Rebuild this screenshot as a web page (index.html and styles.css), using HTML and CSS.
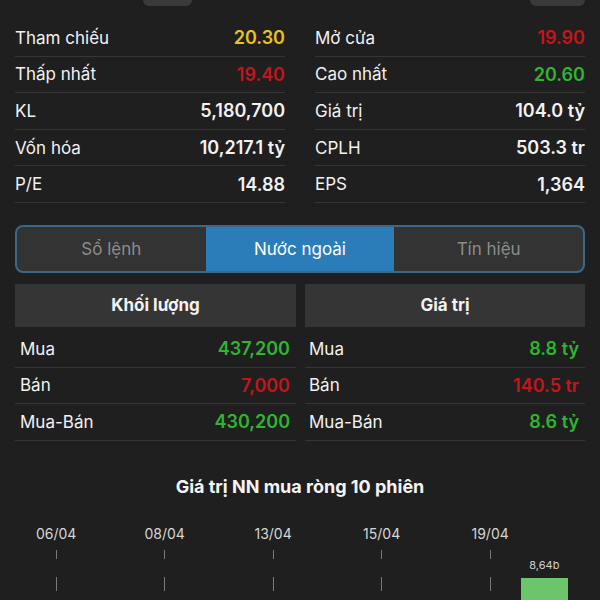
FILE: index.html
```html
<!DOCTYPE html>
<html lang="vi">
<head>
    <meta charset="UTF-8">
    <meta name="viewport" content="width=device-width, initial-scale=1.0">
    <title>Nước ngoài</title>
    <link rel="stylesheet" href="styles.css">
</head>
<body>

    <!-- Top buttons (cut off) -->
    <div class="top-stub">
        <span class="pill pill-left"></span>
        <span class="pill pill-right"></span>
    </div>

    <!-- Stats -->
    <div class="stats">
        <div class="stats-col">
            <div class="row"><span>Tham chiếu</span><b class="yellow">20.30</b></div>
            <div class="row"><span>Thấp nhất</span><b class="red">19.40</b></div>
            <div class="row"><span>KL</span><b>5,180,700</b></div>
            <div class="row"><span>Vốn hóa</span><b>10,217.1 tỷ</b></div>
            <div class="row"><span>P/E</span><b>14.88</b></div>
        </div>
        <div class="stats-col">
            <div class="row"><span>Mở cửa</span><b class="red">19.90</b></div>
            <div class="row"><span>Cao nhất</span><b class="green">20.60</b></div>
            <div class="row"><span>Giá trị</span><b>104.0 tỷ</b></div>
            <div class="row"><span>CPLH</span><b>503.3 tr</b></div>
            <div class="row"><span>EPS</span><b>1,364</b></div>
        </div>
    </div>

    <!-- Tabs -->
    <div class="tabs">
        <div class="tab">Sổ lệnh</div>
        <div class="tab active">Nước ngoài</div>
        <div class="tab">Tín hiệu</div>
    </div>

    <!-- Foreign trading -->
    <div class="foreign">
        <div class="table table-left">
            <div class="table-head">Khối lượng</div>
            <div class="row"><span>Mua</span><b class="green">437,200</b></div>
            <div class="row"><span>Bán</span><b class="red">7,000</b></div>
            <div class="row"><span>Mua-Bán</span><b class="green">430,200</b></div>
        </div>
        <div class="table table-right">
            <div class="table-head">Giá trị</div>
            <div class="row"><span>Mua</span><b class="green">8.8 tỷ</b></div>
            <div class="row"><span>Bán</span><b class="red">140.5 tr</b></div>
            <div class="row"><span>Mua-Bán</span><b class="green">8.6 tỷ</b></div>
        </div>
    </div>

    <!-- Chart -->
    <h2 class="chart-title">Giá trị NN mua ròng 10 phiên</h2>
    <div class="chart">
        <div class="col"><div class="date">06/04</div><i class="tick"></i><i class="tick long"></i></div>
        <div class="col"></div>
        <div class="col"><div class="date">08/04</div><i class="tick"></i><i class="tick long"></i></div>
        <div class="col"></div>
        <div class="col"><div class="date">13/04</div><i class="tick"></i><i class="tick long"></i></div>
        <div class="col"></div>
        <div class="col"><div class="date">15/04</div><i class="tick"></i><i class="tick long"></i></div>
        <div class="col"></div>
        <div class="col"><div class="date">19/04</div><i class="tick"></i><i class="tick long"></i></div>
        <div class="col bar-col">
            <div class="bar-label">8,64b</div>
            <div class="bar" style="height: 40px"></div>
        </div>
    </div>

</body>
</html>
```

FILE: styles.css
```css
* {
    margin: 0;
    padding: 0;
    box-sizing: border-box;
}

body {
    background: #1f1f1f;
    color: #f2f2f2;
    font-family: Inter, "Noto Sans", sans-serif;
    font-size: 17px;
    width: 600px;
    height: 600px;
    overflow: hidden;
}

b {
    font-weight: 600;
    font-size: 18px;
}

.yellow { color: #e9c21f; }
.red { color: #c3161c; }
.green { color: #2fb531; }

/* cut-off buttons at the very top */
.top-stub {
    height: 6px;
    overflow: hidden;
    display: flex;
}

.pill {
    display: block;
    height: 16px;
    margin-top: -10px;
    border-radius: 6px;
    background: #3a3a3a;
}

.pill-left {
    width: 49px;
    margin-left: 143px;
}

.pill-right {
    width: 55px;
    margin-left: 338px;
}

/* stats */
.stats {
    display: grid;
    grid-template-columns: 1fr 1fr;
    gap: 30px;
    padding: 14px 15px 0;
}

.row {
    display: flex;
    justify-content: space-between;
    align-items: center;
    height: 36.6px;
    border-bottom: 1px solid #363636;
}

/* tabs */
.tabs {
    display: grid;
    grid-template-columns: 1fr 1fr 1fr;
    margin: 22px 15px 0;
    height: 48px;
    border: 2px solid #3b6889;
    border-radius: 8px;
    overflow: hidden;
    background: #333333;
}

.tab {
    display: flex;
    align-items: center;
    justify-content: center;
    color: #8c8c8c;
}

.tab.active {
    background: #2b7dba;
    color: #ffffff;
}

/* foreign tables */
.foreign {
    display: grid;
    grid-template-columns: 281px 280px;
    gap: 9px;
    padding: 11px 15px 0;
}

.table-head {
    height: 43px;
    display: flex;
    align-items: center;
    justify-content: center;
    background: #353535;
    font-weight: 700;
    margin-bottom: 4px;
}

.table-left .row {
    padding: 0 6px 0 5px;
}

.table-right .row {
    padding: 0 6px 0 4px;
}

/* chart */
.chart-title {
    margin-top: 35px;
    text-align: center;
    font-size: 18px;
    font-weight: 700;
    color: #f4f4f4;
}

.chart {
    display: grid;
    grid-template-columns: repeat(10, 54.25px);
    padding: 27px 0 0 29px;
}

.col {
    display: flex;
    flex-direction: column;
    align-items: center;
}

.date {
    font-size: 14px;
    color: #d6d6d6;
    height: 20px;
    line-height: 20px;
}

.tick {
    display: block;
    width: 1px;
    height: 9px;
    margin-top: 6px;
    background: #7a7a7a;
}

.tick.long {
    height: 14px;
    margin-top: 18px;
}

.bar-col {
    padding-top: 34px;
}

.bar-label {
    font-size: 11px;
    color: #d0d0d0;
    height: 14px;
    line-height: 14px;
    margin-bottom: 6px;
}

.bar {
    width: 47px;
    background: #6cc46b;
}
```
